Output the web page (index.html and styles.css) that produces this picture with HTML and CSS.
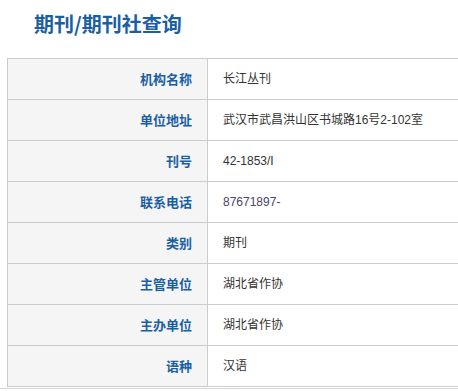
FILE: index.html
```html
<!DOCTYPE html>
<html lang="zh-CN">
<head>
<meta charset="utf-8">
<title>期刊/期刊社查询</title>
<link rel="stylesheet" href="styles.css">
</head>
<body>
<div class="page">
  <h1 class="title">期刊/期刊社查询</h1>
  <table class="info">
    <tbody>
      <tr><th class="label">机构名称</th><td class="value">长江丛刊</td></tr>
      <tr><th class="label">单位地址</th><td class="value">武汉市武昌洪山区书城路16号2-102室</td></tr>
      <tr><th class="label">刊号</th><td class="value">42-1853/I</td></tr>
      <tr><th class="label">联系电话</th><td class="value phone">87671897-</td></tr>
      <tr><th class="label">类别</th><td class="value">期刊</td></tr>
      <tr><th class="label">主管单位</th><td class="value">湖北省作协</td></tr>
      <tr><th class="label">主办单位</th><td class="value">湖北省作协</td></tr>
      <tr><th class="label">语种</th><td class="value">汉语</td></tr>
    </tbody>
  </table>
</div>
<div class="rule"></div>
</body>
</html>
```
FILE: styles.css
```css
html {
  overflow: hidden;
}
body {
  margin: 0;
  background: #fff;
  font-family: "Liberation Sans", "Noto Sans CJK SC", sans-serif;
}
.page {
  padding-left: 7px;
}
.title {
  margin: 0;
  padding: 10px 0 0 27px;
  height: 58px;
  box-sizing: border-box;
  font-family: "Noto Sans CJK SC", sans-serif;
  font-size: 20px;
  line-height: 28px;
  font-weight: 700;
  color: #1b5fa3;
}
.info {
  width: 452px;
  border-collapse: separate;
  border-spacing: 0;
  border-top: 1px solid #cccccc;
  border-left: 1px solid #cccccc;
}
.info th,
.info td {
  box-sizing: border-box;
  height: 41px;
  padding: 0;
  line-height: 18px;
  border-right: 1px solid #cccccc;
  border-bottom: 1px solid #cccccc;
  vertical-align: middle;
}
.label {
  width: 200px;
  padding-right: 15px !important;
  background: #f5f5f5;
  text-align: right;
  font-family: "Noto Sans CJK SC", sans-serif;
  font-size: 13px;
  font-weight: 700;
  color: #1b5fa3;
}
.value {
  padding-left: 15px !important;
  text-align: left;
  font-size: 12px;
  color: #333333;
}
.phone {
  color: #4a4466;
}
.rule {
  margin-top: 1px;
  height: 1px;
  background: #d6d6d6;
}
```
